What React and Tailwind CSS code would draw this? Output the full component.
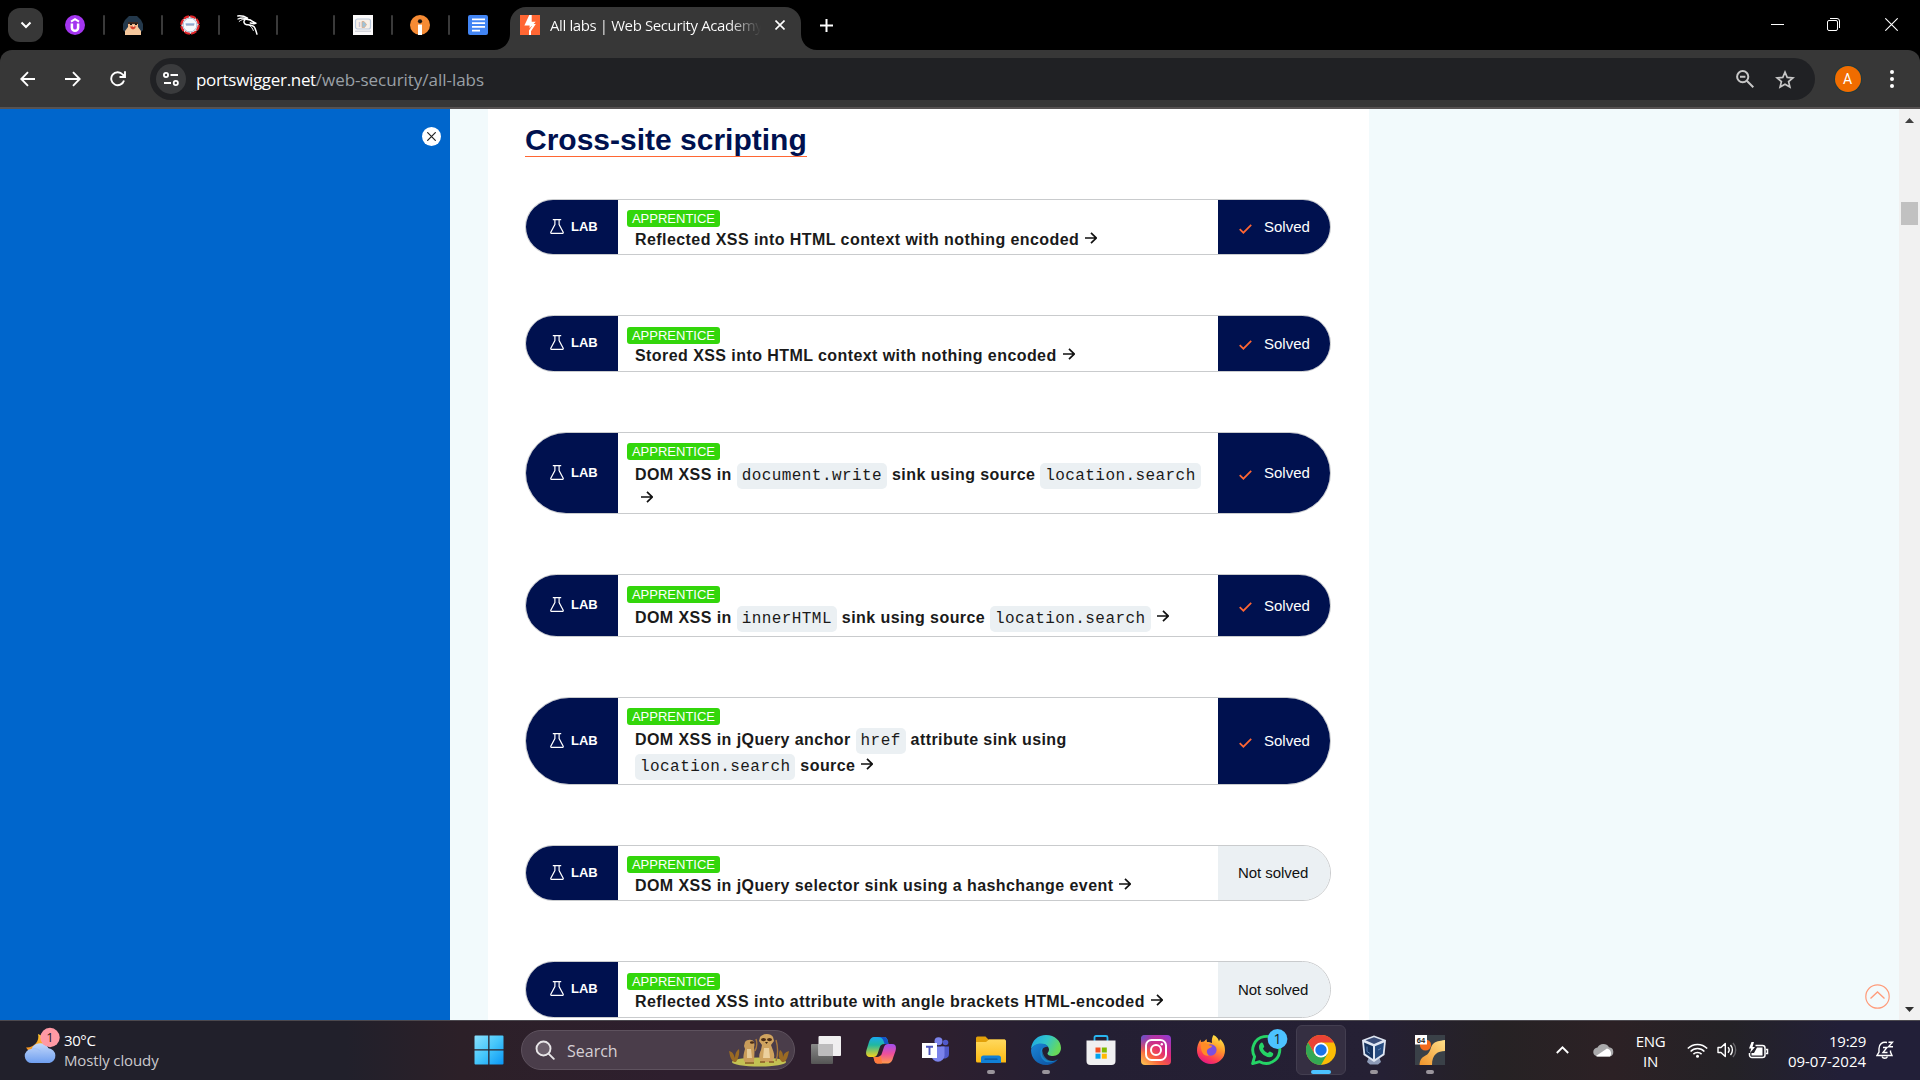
const SEGOE = "font-['Open_Sans','Noto_Sans',sans-serif]";

/* ---------- tab strip ---------- */

function Separator() {
  return <span className="h-5 w-[2px] shrink-0 rounded-full bg-[#3a3a3a]" />;
}

function UdemyIcon() {
  return (
    <svg width="20" height="20" viewBox="0 0 20 20">
      <circle cx="10" cy="10" r="10" fill="#a435f0" />
      <path d="M6 6.600 10 4.200l4 2.400" fill="none" stroke="#fff" strokeWidth="1.900" />
      <path d="M6.900 8.600v4.100a3.100 3.100 0 0 0 6.200 0V8.600" fill="none" stroke="#fff" strokeWidth="2.500" />
    </svg>
  );
}

function HoodIcon() {
  return (
    <svg width="20" height="20" viewBox="0 0 20 20">
      <path d="M3 18 0 15V9l2-4 4-4h8l4 4 2 4v6l-3 3z" fill="#23384b" />
      <path d="M5 8h10v5H5z" fill="#f0b98b" />
      <path d="M2 16 5 12h10l3 4v4H2z" fill="#f5c79c" />
      <path d="M5 7h10v2H5z" fill="#3c2a22" />
      <path d="M7 8.500h2v1.600H7zM12 8.500h2v1.600h-2z" fill="#141414" />
      <path d="M7 11.500h6l-1 2-2 1-2-1z" fill="#d7402c" />
      <path d="M10 10.500h1v1h-1z" fill="#fff" />
    </svg>
  );
}

function SealIcon() {
  return (
    <svg width="20" height="20" viewBox="0 0 20 20">
      <circle cx="10" cy="10" r="8.700" fill="#fff" stroke="#e0262b" strokeWidth="2.200" strokeDasharray="5.600 1.230" />
      <circle cx="10" cy="10" r="6.900" fill="#f7f9fc" stroke="#a9bad3" strokeWidth="1" />
      <rect x="5.500" y="8.300" width="9" height="1.300" fill="#8fb0dc" />
      <rect x="6" y="9.600" width="8" height=".8" fill="#5a6f9c" />
    </svg>
  );
}

function KaliIcon() {
  return (
    <svg width="21" height="20" viewBox="0 0 21 20" fill="none" stroke="#fff" strokeLinecap="round" strokeLinejoin="round">
      <path d="M.8.9C4.500.6 7.500 1.200 10.500 3.200" strokeWidth="1.500" />
      <path d="M1 4C4 2.700 7 2.700 9.800 3.800" strokeWidth="1.300" />
      <path d="M2.200 6.400C4.500 4.500 6 4.200 8.400 4.400" strokeWidth="1" />
      <path d="M8 4.800C6 6.500 7 9.300 9.800 9.700c3.400.4 6.800.3 8.200 3.500.5 1.700 1.300 3.600 1.900 5.900" strokeWidth="1.500" />
      <path d="M9.500 4.200c3 .2 5 1 6.500 2.600l2.800 1.500-1.900.5-3.500-.9" strokeWidth="1.600" />
      <path d="M12.500 10.500c2 1.300 3 2.900 3.800 5" strokeWidth="1" />
    </svg>
  );
}

function ScreenIcon() {
  return (
    <svg width="20" height="20" viewBox="0 0 20 20">
      <rect width="20" height="20" fill="#fbfafa" />
      <rect x="2.500" y="4" width="15" height="10" rx="2" fill="#f7f0e8" stroke="#b9c8dc" strokeWidth="1.200" />
      <path d="M6.500 7v5" stroke="#c8c4d8" strokeWidth="1.500" />
      <path d="M9 6.500v6h2.500l2-3-2.500-3z" fill="#9fc3d8" stroke="#d8a98b" strokeWidth=".8" />
      <path d="M2 15.500h16v1.500H2z" fill="#d5d6dc" />
    </svg>
  );
}

function OrangeInfoIcon() {
  return (
    <svg width="20" height="20" viewBox="0 0 20 20">
      <circle cx="10" cy="10" r="10" fill="#f68b34" />
      <circle cx="10" cy="6.300" r="2.100" fill="#171717" />
      <path d="M8 9.600h4V20H8z" fill="#fff" />
    </svg>
  );
}

function DocsIcon() {
  return (
    <svg width="20" height="20" viewBox="0 0 20 20">
      <rect width="20" height="20" rx="2" fill="#4285f4" />
      <path d="M4 4.300h13M4 8.100h13M4 11.900h13M4 15.700h8" stroke="#fff" strokeWidth="1.700" />
    </svg>
  );
}

function PortSwiggerIcon() {
  return (
    <svg width="20" height="20" viewBox="0 0 20 20">
      <rect width="20" height="20" fill="#ff6633" />
      <path d="M9.300 0h2.400v6.800h4L9.600 13.200V10.600H4.400z" fill="#fff" />
      <path d="M10 9h5.800L11 16.200V20H9v-4.400l3-4.600h-2z" fill="#fff" />
    </svg>
  );
}

const pinnedTabs = [UdemyIcon, HoodIcon, SealIcon, KaliIcon, null, ScreenIcon, OrangeInfoIcon, DocsIcon];

function TabStrip() {
  return (
    <div className="flex h-[50px] shrink-0 bg-black">
      <div className="mt-2 ml-2 flex h-[34px] w-[35px] items-center justify-center rounded-xl bg-[#373737]">
        <svg width="12" height="8" viewBox="0 0 12 8" fill="none" stroke="#fff" strokeWidth="2">
          <path d="M1.500 1.500 6 6l4.500-4.500" />
        </svg>
      </div>
      <div className="flex h-[50px] w-[457px] items-center pl-[4px]">
        {pinnedTabs.map((Icon, i) => (
          <div key={i} className="flex w-[57.500px] shrink-0 items-center">
            <div className="flex w-[56px] shrink-0 justify-center">{Icon && <Icon />}</div>
            {i < 7 && <Separator />}
          </div>
        ))}
      </div>
      <div className="relative mt-[7px] ml-[10px] flex h-[43px] w-[291px] rounded-t-2xl bg-[#373737] pl-[10px]">
        <svg className="absolute bottom-0 -left-4" width="16" height="16" viewBox="0 0 16 16">
          <path d="M16 0v16H0C9 16 16 9 16 0z" fill="#373737" />
        </svg>
        <svg className="absolute -right-4 bottom-0" width="16" height="16" viewBox="0 0 16 16">
          <path d="M0 0v16h16C7 16 0 9 0 0z" fill="#373737" />
        </svg>
        <div className="mt-2">
          <PortSwiggerIcon />
        </div>
        <div
          className={`${SEGOE} mt-[6px] ml-[10px] h-6 w-[211px] overflow-hidden bg-gradient-to-r from-white from-85% to-[#373737] bg-clip-text text-[15px] leading-6 tracking-[-0.390px] whitespace-nowrap text-transparent`}
        >
          All labs | Web Security Academy
        </div>
        <svg className="mt-[13px] ml-[14px]" width="10" height="10" viewBox="0 0 10 10" stroke="#fff" strokeWidth="1.600">
          <path d="M.5.5l9 9M9.500.5l-9 9" />
        </svg>
      </div>
      <svg className="mt-[19px] ml-[19px]" width="13" height="13" viewBox="0 0 13 13" stroke="#fff" strokeWidth="2">
        <path d="M6.500 0v13M0 6.500h13" />
      </svg>
      <div className="mr-[22px] ml-auto flex h-[49px] items-center">
        <span className="h-px w-[13px] bg-white" />
        <svg className="ml-[43px]" width="13" height="13" viewBox="0 0 13 13" fill="none" stroke="#fff">
          <rect x=".5" y="2.500" width="10" height="10" rx="1.500" />
          <path d="M3 .5h7a2.500 2.500 0 0 1 2.500 2.500v7" />
        </svg>
        <svg className="ml-[45px]" width="13" height="13" viewBox="0 0 13 13" stroke="#fff" strokeWidth="1.100">
          <path d="M.3.3l12.400 12.400M12.700.3L.3 12.700" />
        </svg>
      </div>
    </div>
  );
}

/* ---------- toolbar ---------- */

function Toolbar() {
  return (
    <div className="h-[59px] shrink-0 bg-black">
      <div className="flex h-full items-start rounded-t-xl border-b-2 border-[#565252] bg-[#373737] pt-2">
        <div className="flex h-[42px] w-[150px] items-center pl-5">
          <svg width="16" height="16" viewBox="0 0 16 16" fill="none" stroke="#fff" strokeWidth="1.900">
            <path d="M15 8H1.500M8 1.200 1.300 8 8 14.800" />
          </svg>
          <svg className="ml-[29px]" width="16" height="16" viewBox="0 0 16 16" fill="none" stroke="#fff" strokeWidth="1.900">
            <path d="M0 8h14.500M8 1.200 14.700 8 8 14.800" />
          </svg>
          <svg className="ml-[29px]" width="16" height="16" viewBox="0 0 16 16" fill="none" stroke="#fff" strokeWidth="1.900">
            <path d="M14 9.500A6.500 6.500 0 1 1 12.700 3.500L15 5.700M15 .3V6H9.500" />
          </svg>
        </div>
        <div className="flex h-[42px] w-[1665px] items-center rounded-full bg-[#202124] pl-[6px]">
          <div className="flex h-[30px] w-[30px] items-center justify-center rounded-full bg-[#3a3b3d]">
            <svg width="16" height="14" viewBox="0 0 16 14" fill="none" stroke="#fff" strokeWidth="1.800">
              <circle cx="3" cy="3" r="2.100" />
              <path d="M7.500 3H15M1 11h7" />
              <circle cx="12.800" cy="11" r="2.100" />
            </svg>
          </div>
          <div className={`${SEGOE} mt-[2px] ml-[10px] text-[17px] leading-6 tracking-[-0.030px] whitespace-nowrap text-[#9aa0a6]`}>
            <span className="tracking-[-0.320px] text-white">portswigger.net</span>/web-security/all-labs
          </div>
          <svg className="mr-[21px] ml-auto" width="18" height="18" viewBox="0 0 18 18" fill="none" stroke="#c7c7c7" strokeWidth="2">
            <circle cx="6.700" cy="6.700" r="5.600" />
            <path d="m10.800 10.800 6.500 6.500M4 6.700h5.400" />
          </svg>
          <svg className="mr-5" width="20" height="19" viewBox="0 0 20 19" fill="none" stroke="#c7c7c7" strokeWidth="1.700">
            <path d="m10 2.200 2.200 5.200 5.700.5-4.300 3.700 1.300 5.500L10 14.200l-4.900 2.900 1.300-5.500L2.100 7.900l5.700-.5z" />
          </svg>
        </div>
        <div className="mt-2 ml-[19.500px] flex h-[26px] w-[26px] items-center justify-center rounded-full bg-[#f06c00] font-['Roboto',sans-serif] text-sm text-white ring-1 ring-[#1f3a3d]">
          A
        </div>
        <div className="mt-[12px] ml-[29.500px] flex flex-col gap-[3px]">
          <span className="h-1 w-1 rounded-full bg-white" />
          <span className="h-1 w-1 rounded-full bg-white" />
          <span className="h-1 w-1 rounded-full bg-white" />
        </div>
      </div>
    </div>
  );
}

/* ---------- page ---------- */

function Arrow() {
  return (
    <svg className="ml-[6px] inline-block align-[1px]" width="12" height="12" viewBox="0 0 12 12" fill="none" stroke="#111" strokeWidth="1.700">
      <path d="M0 6h11M6 .8 11.200 6 6 11.200" />
    </svg>
  );
}

function Code({ children }) {
  return (
    <code className="inline-block h-[26px] rounded-[5px] bg-[#ebf0f3] px-[5px] font-['Liberation_Mono',monospace] text-[16px] leading-[26px] font-normal">
      {children}
    </code>
  );
}

function Lab({ card, badge, title, solved, lines }) {
  return (
    <div className={`${card} flex w-[806px] shrink-0 overflow-hidden rounded-full border border-[#c9cbcd] bg-white`}>
      <div className="flex w-[92px] shrink-0 items-center bg-[#00114f] pb-px pl-6">
        <svg className="mb-px" width="14" height="15" viewBox="0 0 14 15" fill="none" stroke="#fff" strokeWidth="1.200">
          <path d="M2.800.6h8.400M4.900.6v4.900L.8 13.200q-.3 1.200 1 1.200h10.400q1.300 0 1-1.200L9.100 5.500V.6" />
        </svg>
        <span className="ml-[7px] text-[13px] leading-4 font-bold text-white">LAB</span>
      </div>
      <div className="min-w-0 flex-1 pl-[9px]">
        <div className={`${badge} flex h-[17px] w-[93px] items-center justify-center rounded-[3px] bg-[#33d60b] text-[13px] leading-[17px] text-white`}>
          APPRENTICE
        </div>
        <div className={`${title} pl-[8px] text-[16px] font-bold tracking-[0.430px] text-[#1a1a1a]`}>
          {lines.map((line, i) => (
            <div key={i} className="h-full whitespace-pre">
              {line}
            </div>
          ))}
        </div>
      </div>
      {solved ? (
        <div className="flex w-[112px] shrink-0 items-center bg-[#00114f] pt-px pl-[21px] text-[15px] text-white">
          <svg className="mt-[2px] mr-3" width="13" height="10" viewBox="0 0 13 10" fill="none" stroke="#ff6633" strokeWidth="1.700">
            <path d="M.7 5.200 4.400 8.700 12.200.9" />
          </svg>
          Solved
        </div>
      ) : (
        <div className="flex w-[112px] shrink-0 items-center bg-[#ebf0f3] pt-px pl-5 text-[15px] tracking-[-0.050px] whitespace-nowrap text-[#111]">
          Not solved
        </div>
      )}
    </div>
  );
}

const labs = [
  {
    card: "h-[56px]",
    badge: "mt-[10px]",
    title: "mt-[4px] h-[18px] leading-[18px]",
    solved: true,
    lines: [<>Reflected XSS into HTML context with nothing encoded<Arrow /></>],
  },
  {
    card: "h-[57px]",
    badge: "mt-[11px]",
    title: "mt-[3px] h-[18px] leading-[18px]",
    solved: true,
    lines: [<>Stored XSS into HTML context with nothing encoded<Arrow /></>],
  },
  {
    card: "h-[82px]",
    badge: "mt-[10px]",
    title: "mt-[2px] h-[24px] leading-[26px]",
    solved: true,
    lines: [
      <>DOM XSS in <Code>document.write</Code> sink using source <Code>location.search</Code></>,
      <><Arrow /></>,
    ],
  },
  {
    card: "h-[63px]",
    badge: "mt-[11px]",
    title: "mt-[2px] h-[26px] leading-[26px]",
    solved: true,
    lines: [<>DOM XSS in <Code>innerHTML</Code> sink using source <Code>location.search</Code><Arrow /></>],
  },
  {
    card: "h-[88px]",
    badge: "mt-[10px]",
    title: "mt-[2px] h-[26px] leading-[26px]",
    solved: true,
    lines: [
      <>DOM XSS in jQuery anchor <Code>href</Code> attribute sink using</>,
      <><Code>location.search</Code> source<Arrow /></>,
    ],
  },
  {
    card: "h-[56px]",
    badge: "mt-[10px]",
    title: "mt-[4px] h-[18px] leading-[18px]",
    lines: [<>DOM XSS in jQuery selector sink using a hashchange event<Arrow /></>],
  },
  {
    card: "h-[57px]",
    badge: "mt-[11px]",
    title: "mt-[3px] h-[18px] leading-[18px]",
    lines: [<>Reflected XSS into attribute with angle brackets HTML-encoded<Arrow /></>],
  },
];

function Page() {
  return (
    <main className="flex h-[911px] shrink-0 overflow-hidden bg-[#f2fafc] font-['Liberation_Sans',Arial,sans-serif]">
      <aside className="flex w-[450px] shrink-0 justify-end bg-[#0066cc]">
        <div className="mt-[18px] mr-[9px] flex h-[19px] w-[19px] items-center justify-center rounded-full bg-white">
          <svg width="9" height="9" viewBox="0 0 9 9" stroke="#222" strokeWidth="1.200">
            <path d="M.3.3l8.400 8.400M8.700.3.3 8.700" />
          </svg>
        </div>
      </aside>
      <section className="ml-[38px] w-[881px] shrink-0 bg-white pl-[37px]">
        <h2 className="mt-[12px] flex h-[36px] w-[282px] border-b border-[#ff6633] text-[30px] leading-[38px] font-bold whitespace-nowrap text-[#00114f]">
          Cross-site scripting
        </h2>
        <div className="mt-[42px] flex flex-col gap-[60px]">
          {labs.map((lab, i) => (
            <Lab key={i} {...lab} />
          ))}
        </div>
      </section>
      <div className="flex flex-1 items-end justify-end pr-[9px] pb-[11px]">
        <svg width="25" height="25" viewBox="0 0 25 25" fill="none" stroke="#ff9b7a">
          <circle cx="12.500" cy="12.500" r="11.700" strokeWidth="1.200" />
          <path d="m5.500 14.500 7-6.500 7 6.500" strokeWidth="1.300" />
        </svg>
      </div>
      <div className="flex w-[21px] shrink-0 flex-col items-center bg-[#f1f1f1]">
        <svg className="mt-[9px]" width="9" height="5" viewBox="0 0 9 5">
          <path d="M4.500 0 9 5H0z" fill="#404040" />
        </svg>
        <div className="mt-[79px] h-[23px] w-[17px] bg-[#c1c1c1]" />
        <svg className="mt-auto mb-[8px]" width="9" height="5" viewBox="0 0 9 5">
          <path d="M0 0h9L4.500 5z" fill="#303030" />
        </svg>
      </div>
    </main>
  );
}

/* ---------- taskbar icons ---------- */

function WeatherIcon() {
  return (
    <svg width="36" height="37" viewBox="0 0 36 37">
      <defs>
        <linearGradient id="cloud" x1="0" y1="0" x2="0" y2="1">
          <stop offset="0" stopColor="#c4d9fb" />
          <stop offset="1" stopColor="#6f9ff0" />
        </linearGradient>
        <linearGradient id="moon" x1="0" y1="0" x2="0" y2="1">
          <stop offset="0" stopColor="#ffc62e" />
          <stop offset="1" stopColor="#f58a1f" />
        </linearGradient>
      </defs>
      <path d="M14 7c2 7-4 14-12 13.500C5 26 13 27 18 22s4-12-4-15z" fill="url(#moon)" />
      <path d="M8 36a7 7 0 0 1-.5-14 9.500 9.500 0 0 1 17-.8A7.500 7.500 0 0 1 25.500 36z" fill="url(#cloud)" />
      <path d="M8 22a9.500 9.500 0 0 1 10 4" fill="none" stroke="#9dbff7" strokeWidth="1" />
      <circle cx="26" cy="10.500" r="9.700" fill="#ff99a4" />
      <text x="26" y="15.300" textAnchor="middle" fontFamily="Open Sans" fontSize="13" fill="#1b1b1b">1</text>
    </svg>
  );
}

function WindowsIcon() {
  return (
    <svg width="30" height="30" viewBox="0 0 30 30">
      <defs>
        <linearGradient id="win" x1="0" y1="0" x2="1" y2="1">
          <stop offset="0" stopColor="#8be1fd" />
          <stop offset=".5" stopColor="#45c6fb" />
          <stop offset="1" stopColor="#0a96f5" />
        </linearGradient>
      </defs>
      <path d="M1.500.5h12.700v13.700H.500V1.500a1 1 0 0 1 1-1zM15.500.5h13a1 1 0 0 1 1 1v12.700h-14zM.500 15.500h13.700v14H1.500a1 1 0 0 1-1-1zM15.500 15.500h14v13a1 1 0 0 1-1 1h-13z" fill="url(#win)" />
    </svg>
  );
}

function MeerkatsIcon() {
  return (
    <svg width="62" height="33" viewBox="0 0 62 33">
      <ellipse cx="31" cy="28" rx="27" ry="4.600" fill="#c3c253" />
      <path d="M6 28c-4-3-4-7-5-11 4 1 5 4 6 7 0-4 1-7 4-9 1 5-1 10-3 13zM54 28c-4-4-4-8-2-12 3 2 3 5 3 7 1-4 3-5 6-6-1 5-2 9-5 11z" fill="#9a6a23" />
      <path d="M27 17c2-4 2-9 1-12M48 27c2-6 2-14 0-21" stroke="#a8763a" strokeWidth="1.400" fill="none" />
      <path d="M17 8c2-3 8-3 9 0l.5 3c-1 3 0 4 0 7l-.5 10h-9c-3-3-1-9 0-13l-1-3z" fill="#c99c5a" />
      <path d="M19 15h4l1 9h-5z" fill="#e6c995" />
      <ellipse cx="24" cy="8.500" rx="2.100" ry="1.200" fill="#4a2c16" />
      <path d="M32 3c3-4 11-4 13 0l1 4-3 4c2 6 4 9 3 13l-2 4H34c-4-3-3-8-1-12l1-5-3-4z" fill="#cfa35f" />
      <path d="M36 14h5l1 10h-7z" fill="#ecd09d" />
      <ellipse cx="35.500" cy="5.600" rx="2.500" ry="1.600" fill="#4a2c16" />
      <ellipse cx="41.500" cy="5.600" rx="2.500" ry="1.600" fill="#4a2c16" />
      <path d="M37 8h3l-1.500 2z" fill="#3a2414" />
      <path d="M32 28h5M41 28h5M17 29h9" stroke="#8b5b26" strokeWidth="1.300" />
    </svg>
  );
}

function TaskViewIcon() {
  return (
    <svg width="30" height="30" viewBox="0 0 30 30">
      <defs>
        <linearGradient id="tvBack" x1="0" y1="0" x2="0" y2="1">
          <stop offset="0" stopColor="#8a8a8a" />
          <stop offset="1" stopColor="#555" />
        </linearGradient>
      </defs>
      <rect x="0" y="9" width="22" height="20" rx="1" fill="url(#tvBack)" />
      <rect x="7.500" y="1" width="22.500" height="20" rx="1" fill="#f0eff0" />
      <path d="M7.500 9H22v12H8.500a1 1 0 0 1-1-1z" fill="#bdbcbd" />
    </svg>
  );
}

function CopilotIcon() {
  return (
    <svg width="30" height="28" viewBox="0 0 30 28">
      <defs>
        <linearGradient id="cpA" x1="0" y1="0" x2="0" y2="1">
          <stop offset="0" stopColor="#1aa9f0" />
          <stop offset=".4" stopColor="#20b8a0" />
          <stop offset="1" stopColor="#f8d21c" />
        </linearGradient>
        <linearGradient id="cpB" x1="0" y1="0" x2="0" y2="1">
          <stop offset="0" stopColor="#a14ff0" />
          <stop offset=".5" stopColor="#ee4f9c" />
          <stop offset="1" stopColor="#ff9a4a" />
        </linearGradient>
      </defs>
      <path d="M12 1h6c3 0 3.500 2 4.500 7h-4c-3 0-4 1-5 4l-2 6c-.8 2-2 3-4 3H4c-4 0-4.500-3-3.500-7l2.500-8C4 2.500 6 1 8 1z" fill="url(#cpA)" />
      <path d="M12 1h6c3 0 3.500 2 4.500 7h-4c-1-4-2-7-6.500-7z" fill="#1554c8" />
      <path d="M18 27.500h-6c-3 0-3.500-2-4.500-6.500h3.500c3 0 4-1 5-4l2-6c.8-2 2-3 4-3h4c4 0 4.500 3 3.500 7L27 22c-1 4-3 5.500-6 5.500z" fill="url(#cpB)" />
      <path d="M12 27.500c-3 0-3.500-2-4.500-6.500h3.500c2 0 3-.5 4-2l1 8.500z" fill="#ff7a3d" />
    </svg>
  );
}

function TeamsIcon() {
  return (
    <svg width="28" height="26" viewBox="0 0 28 26">
      <circle cx="16.500" cy="4.300" r="4" fill="#7b83eb" />
      <circle cx="23.500" cy="5.500" r="2.800" fill="#5059c9" />
      <path d="M19 9.500h8V17a4.500 4.500 0 0 1-8 2.800z" fill="#5059c9" />
      <path d="M9.500 9.500h13v8.700a6.500 6.500 0 0 1-13 0z" fill="#7b83eb" />
      <rect x="0" y="6" width="15" height="15" fill="#fff" />
      <path d="M4 9.800h7M7.500 9.800V18" stroke="#4b53bc" strokeWidth="1.900" />
    </svg>
  );
}

function ExplorerIcon() {
  return (
    <svg width="30" height="28" viewBox="0 0 30 28">
      <defs>
        <linearGradient id="folder" x1="0" y1="0" x2="0" y2="1">
          <stop offset="0" stopColor="#ffd95e" />
          <stop offset="1" stopColor="#fcb912" />
        </linearGradient>
      </defs>
      <path d="M0 2a1.500 1.500 0 0 1 1.500-1.500h8l3 3H29V10H0z" fill="#e2a009" />
      <path d="M0 6h10l3-2.500h15.500a1.500 1.500 0 0 1 1.500 1.500v21.500H1.500A1.500 1.500 0 0 1 0 25z" fill="url(#folder)" />
      <path d="M5 27v-5a2.500 2.500 0 0 1 2.500-2.500h15A2.500 2.500 0 0 1 25 22v5z" fill="#1180d6" />
      <path d="M9 23.200h12" stroke="#0b5296" strokeWidth="1.300" strokeLinecap="round" />
    </svg>
  );
}

function EdgeIcon() {
  return (
    <svg width="30" height="30" viewBox="0 0 30 30">
      <defs>
        <linearGradient id="edTop" x1="0" y1="0" x2="1" y2=".4">
          <stop offset="0" stopColor="#1ba4e8" />
          <stop offset=".55" stopColor="#32c6c9" />
          <stop offset="1" stopColor="#67d95a" />
        </linearGradient>
        <linearGradient id="edLow" x1="0" y1="0" x2="1" y2="1">
          <stop offset="0" stopColor="#1b87d8" />
          <stop offset="1" stopColor="#0b4c9a" />
        </linearGradient>
      </defs>
      <path d="M0 14C1 5 7 0 15 0c9 0 15 6 15 13 0 5-4 8-8 8-4 0-5.500-1.500-5.500-2.500S18 17 18 14.500c0-3-3-5.500-7-5.500-5 0-9 2-11 5z" fill="url(#edTop)" />
      <path d="M0 15c1-4 5-6.500 10-6.500 3 0 6 1 7.500 3.500-5-1-7.500 3-6.500 7.500 1.500 6 9 9 16 4.500C24.500 27.500 20 30 15 30 6.500 30 0 23.500 0 15z" fill="url(#edLow)" />
      <path d="M11 13c-3 4-2 10 3 13.500 3 1.500 8 1 12.500-1.500-7 3-15-.5-15.500-12z" fill="#1c9ddf" opacity=".6" />
    </svg>
  );
}

function StoreIcon() {
  return (
    <svg width="30" height="30" viewBox="0 0 30 30">
      <path d="M8.500 6.500v-4a1.500 1.500 0 0 1 1.500-1.500h10a1.500 1.500 0 0 1 1.500 1.500v4" fill="none" stroke="#29b6f0" strokeWidth="1.800" />
      <path d="M.5 5.500h29V26a4 4 0 0 1-4 4h-21a4 4 0 0 1-4-4z" fill="#f0f0f1" />
      <path d="M9.500 12.500h5v5h-5z" fill="#f25022" />
      <path d="M15.800 12.500h5v5h-5z" fill="#7fba00" />
      <path d="M9.500 18.700h5v5h-5z" fill="#00a4ef" />
      <path d="M15.800 18.700h5v5h-5z" fill="#ffb900" />
    </svg>
  );
}

function InstagramIcon() {
  return (
    <svg width="30" height="30" viewBox="0 0 30 30">
      <defs>
        <linearGradient id="ig" x1=".1" y1="1" x2=".9" y2="0">
          <stop offset="0" stopColor="#fdc04f" />
          <stop offset=".3" stopColor="#f9613e" />
          <stop offset=".6" stopColor="#df2a78" />
          <stop offset="1" stopColor="#8f3bd0" />
        </linearGradient>
        <radialGradient id="igBlue" cx="0" cy="0" r=".6">
          <stop offset="0" stopColor="#4f5bd5" />
          <stop offset="1" stopColor="#8f3bd0" stopOpacity="0" />
        </radialGradient>
      </defs>
      <rect width="30" height="30" rx="4" fill="url(#ig)" />
      <rect width="30" height="30" rx="4" fill="url(#igBlue)" />
      <rect x="5" y="5" width="20" height="20" rx="5.500" fill="none" stroke="#fff" strokeWidth="2" />
      <circle cx="15" cy="15" r="5" fill="none" stroke="#fff" strokeWidth="2" />
      <circle cx="20.800" cy="9.200" r="1.200" fill="#fff" />
    </svg>
  );
}

function FirefoxIcon() {
  return (
    <svg width="30" height="30" viewBox="0 0 30 30">
      <defs>
        <linearGradient id="ff" x1=".8" y1="0" x2=".3" y2="1">
          <stop offset="0" stopColor="#fff04a" />
          <stop offset=".4" stopColor="#ff9a2a" />
          <stop offset=".75" stopColor="#ff4150" />
          <stop offset="1" stopColor="#e31587" />
        </linearGradient>
      </defs>
      <path d="M17.500 0c4 2 5 4.500 5.500 6.500l1-2.500c4 3.500 5 7 5 11.500a14 13.500 0 0 1-28 0C1 12 2 8 4.500 4.500L5 7l3-.5L10.500 4l.5 3c2 0 4 .500 5 1-.5-3 0-6 1.500-8z" fill="url(#ff)" />
      <circle cx="14.800" cy="15" r="5.800" fill="#7b4fe0" />
      <path d="M5 8c4-1 6 .500 8 2.200l3 .5c0 2-3 2.300-4 3.300-2 2-1 4.800 1 6.500-5 1-9-3-8-12.500z" fill="#ff8b26" />
    </svg>
  );
}

function WhatsAppIcon() {
  return (
    <svg className="overflow-visible" width="30" height="30" viewBox="0 0 30 30">
      <path d="M1.600 28.600 3.600 21.700A13.500 13.500 0 1 1 8.700 26.700z" fill="none" stroke="#25d366" strokeWidth="2.900" strokeLinejoin="round" />
      <path d="M9.500 8.200c1-1 2-.8 2.500.200l1.200 2.900c.2.700-1.200 1.800-1.200 2.200.8 2 2.700 3.700 4.700 4.500.6.100 1.500-1.700 2.200-1.500l2.900 1.500c.8.500.4 2.500-.8 3.400-3 2-7.500-.400-10-3-2.600-2.700-4.500-7-1.500-10.200z" fill="#25d366" />
      <circle cx="26.500" cy="4" r="9.900" fill="#4cc2ff" />
      <text x="26.500" y="9" textAnchor="middle" fontFamily="Open Sans" fontSize="14" fill="#1b1b1b">1</text>
    </svg>
  );
}

function ChromeIcon() {
  return (
    <svg width="30" height="30" viewBox="0 0 30 30">
      <circle cx="15" cy="15" r="15" fill="#fbbc05" />
      <path d="M2 7.500a15 15 0 0 1 26 0H15L8.500 18.700z" fill="#ea4335" />
      <path d="M2 7.500A15 15 0 0 0 15 30l6.500-11.200L8.500 18.700z" fill="#34a853" />
      <circle cx="15" cy="15" r="7.400" fill="#fff" />
      <circle cx="15" cy="15" r="5.700" fill="#1a73e8" />
    </svg>
  );
}

function VirtualBoxIcon() {
  return (
    <svg width="26" height="30" viewBox="0 0 26 30">
      <path d="M8 22h10l2 5-3 2.500H9L6 27z" fill="#8e9bb8" />
      <path d="M13 .5 25 5l-1.500 15L13 27 2.500 20 1 5z" fill="#dfe6f2" />
      <path d="M13 2.200 21.500 5.300 13 9 4.500 5.300z" fill="#3a4d78" />
      <path d="M3 7.500 12 11.300V24L4.200 18.800z" fill="#16335f" />
      <path d="M23 7.500 14 11.300V24l7.800-5.200z" fill="#274c80" />
      <path d="M6 11.500v5l3 2M17 15l3-1.500" stroke="#5b7fb0" fill="none" />
    </svg>
  );
}

function WinRunIcon() {
  return (
    <svg width="30" height="30" viewBox="0 0 30 30">
      <defs>
        <linearGradient id="swoosh" x1="1" y1="0" x2="0" y2="1">
          <stop offset="0" stopColor="#ffe08a" />
          <stop offset="1" stopColor="#f0932a" />
        </linearGradient>
      </defs>
      <rect width="30" height="30" fill="#3a4148" />
      <circle cx="10.500" cy="10" r="5.600" fill="#f26a1b" />
      <path d="M30 5v11c-7 0-13 3-13 14H4.500c.5-5 1.500-7 6-9.500C16 18 15 12 18 9c3-3 6-3 12-4z" fill="url(#swoosh)" />
      <rect x="0" y="0" width="12" height="9.500" fill="#fff" />
      <text x="6" y="7.800" textAnchor="middle" fontFamily="Liberation Sans" fontWeight="700" fontSize="7.500" fill="#222">64</text>
    </svg>
  );
}

const apps = [
  { Icon: TaskViewIcon },
  { Icon: CopilotIcon },
  { Icon: TeamsIcon },
  { Icon: ExplorerIcon, mark: "w-2 bg-[#9a959c]" },
  { Icon: EdgeIcon, mark: "w-2 bg-[#9a959c]" },
  { Icon: StoreIcon },
  { Icon: InstagramIcon },
  { Icon: FirefoxIcon },
  { Icon: WhatsAppIcon },
  { Icon: ChromeIcon, mark: "w-5 bg-[#4cc2ff]", active: true },
  { Icon: VirtualBoxIcon, mark: "w-2 bg-[#9a959c]", cell: "w-[53px] pr-px" },
  { Icon: WinRunIcon, mark: "w-2 bg-[#9a959c]", cell: "w-[58px]" },
];

function Taskbar() {
  return (
    <footer
      className={`${SEGOE} flex h-[60px] shrink-0 border-t border-[#4c494f] bg-[linear-gradient(90deg,#21202b_0%,#21202b_18%,#2c2028_24%,#2e1f2e_35%,#2e1f2e_48%,#241f33_56%,#252034_72%,#262224_78%,#2c2125_84%,#242226_90%,#221f38_96%)] text-white`}
    >
      <div className="flex w-[474px] shrink-0 pt-[6px] pl-6">
        <WeatherIcon />
        <div className="ml-[4px] pt-[3px] text-[15px] leading-5 whitespace-nowrap">
          <div className="tracking-[-0.400px]">30°C</div>
          <div className="tracking-[-0.120px] text-[#cbc9cd]">Mostly cloudy</div>
        </div>
      </div>
      <div className="mt-[14px]">
        <WindowsIcon />
      </div>
      <div className="mt-[9px] ml-[17px] flex h-10 w-[274px] shrink-0 items-center rounded-full border border-[#5e525e] bg-[#4a3d4a] pl-[13px]">
        <svg width="20" height="20" viewBox="0 0 20 20" fill="none" stroke="#e8e6e8" strokeWidth="1.900" strokeLinecap="round">
          <circle cx="8.500" cy="8.500" r="7" fill="#6b5f6b" />
          <path d="m13.800 13.800 5 5" />
        </svg>
        <span className="mt-px ml-[12px] text-[16px] text-[#d5d0d5]">Search</span>
        <div className="mr-[4px] ml-auto">
          <MeerkatsIcon />
        </div>
      </div>
      <div className="ml-[3px] flex">
        {apps.map(({ Icon, mark, active, cell = "w-[55px]" }, i) => (
          <div key={i} className={`${cell} flex justify-center pt-1`}>
            <div
              className={`relative flex h-[50px] w-[50px] shrink-0 items-center justify-center rounded-md ${
                active ? "border border-[#433e50] bg-[#352f42]" : ""
              }`}
            >
              <Icon />
              {mark && <span className={`absolute h-1 rounded-full ${active ? "bottom-0" : "bottom-px"} ${mark}`} />}
            </div>
          </div>
        ))}
      </div>
      <div className="mr-[26px] ml-auto flex h-[58px] items-center">
        <svg width="13" height="8" viewBox="0 0 13 8" fill="none" stroke="#fff" strokeWidth="1.900">
          <path d="M.8 7 6.500 1.400 12.200 7" />
        </svg>
        <svg className="ml-6" width="21" height="14" viewBox="0 0 21 14">
          <path d="M5 13.500a4.500 4.500 0 0 1-.5-9A6.500 6.500 0 0 1 16 4.200a4.700 4.700 0 0 1 .5 9.300z" fill="#a9a9ab" />
          <path d="M3 13 14 5.500a5 5 0 0 1 3 8H4z" fill="#fff" />
        </svg>
        <div className="ml-[21px] flex w-[31px] flex-col items-center pt-px text-[15px] leading-5 tracking-[-0.300px]">
          <div>ENG</div>
          <div>IN</div>
        </div>
        <svg className="ml-[21px]" width="21" height="15" viewBox="0 0 21 15" fill="none" stroke="#fff" strokeWidth="1.500">
          <path d="M.8 5.500a13.500 13.500 0 0 1 19.400 0M3.600 8.400a9.600 9.600 0 0 1 13.800 0M6.400 11.100a5.800 5.800 0 0 1 8.200 0" />
          <circle cx="10.500" cy="13.200" r="1.500" fill="#fff" stroke="none" />
        </svg>
        <svg className="ml-[9px]" width="21" height="16" viewBox="0 0 21 16" fill="none" stroke="#fff" strokeWidth="1.400">
          <path d="M1 5.500h3L8.300 1.500v13L4 10.500H1z" strokeLinejoin="round" />
          <path d="M11 5.300a4 4 0 0 1 0 5.400M13.500 3a7.500 7.500 0 0 1 0 10" />
          <path d="M16 1a10.500 10.500 0 0 1 0 14" stroke="#67666a" />
        </svg>
        <svg className="ml-[10px]" width="21" height="17" viewBox="0 0 21 17" fill="none" stroke="#fff" strokeWidth="1.500">
          <path d="M7.500 3.500h7a2.500 2.500 0 0 1 2.500 2.500v7a2.500 2.500 0 0 1-2.500 2.500H4A2.500 2.500 0 0 1 1.500 13v-2" />
          <path d="M18 7.500h1.500v4H18" />
          <path d="M9 5.500h5.500v8H3.500V11H6z" fill="#fff" stroke="none" />
          <path d="M3.500 0 1 6.500h2.200L2 11l5-6H4.500L6 0z" fill="#fff" stroke="none" />
        </svg>
        <div className="ml-[13px] flex w-[84px] flex-col items-end pt-px text-[15px] leading-5 whitespace-nowrap">
          <div className="tracking-[-0.250px]">19:29</div>
          <div className="tracking-[-0.020px]">09-07-2024</div>
        </div>
        <svg className="ml-[10px]" width="18" height="19" viewBox="0 0 18 19" fill="none" stroke="#fff" strokeWidth="1.400">
          <path d="M11 1.500C6 .5 3 3.500 3 7.500V11L1 14.500h15L14.500 11V9.500" />
          <path d="M6 15.500a3 3 0 0 0 5.500 0M7 6.500h4l-4 5h4.500M12.500 1.200h4l-4 4.500h4.500" />
        </svg>
      </div>
    </footer>
  );
}

export default function App() {
  return (
    <div className="flex h-[1080px] w-[1920px] flex-col overflow-hidden bg-white">
      <TabStrip />
      <Toolbar />
      <Page />
      <Taskbar />
    </div>
  );
}
